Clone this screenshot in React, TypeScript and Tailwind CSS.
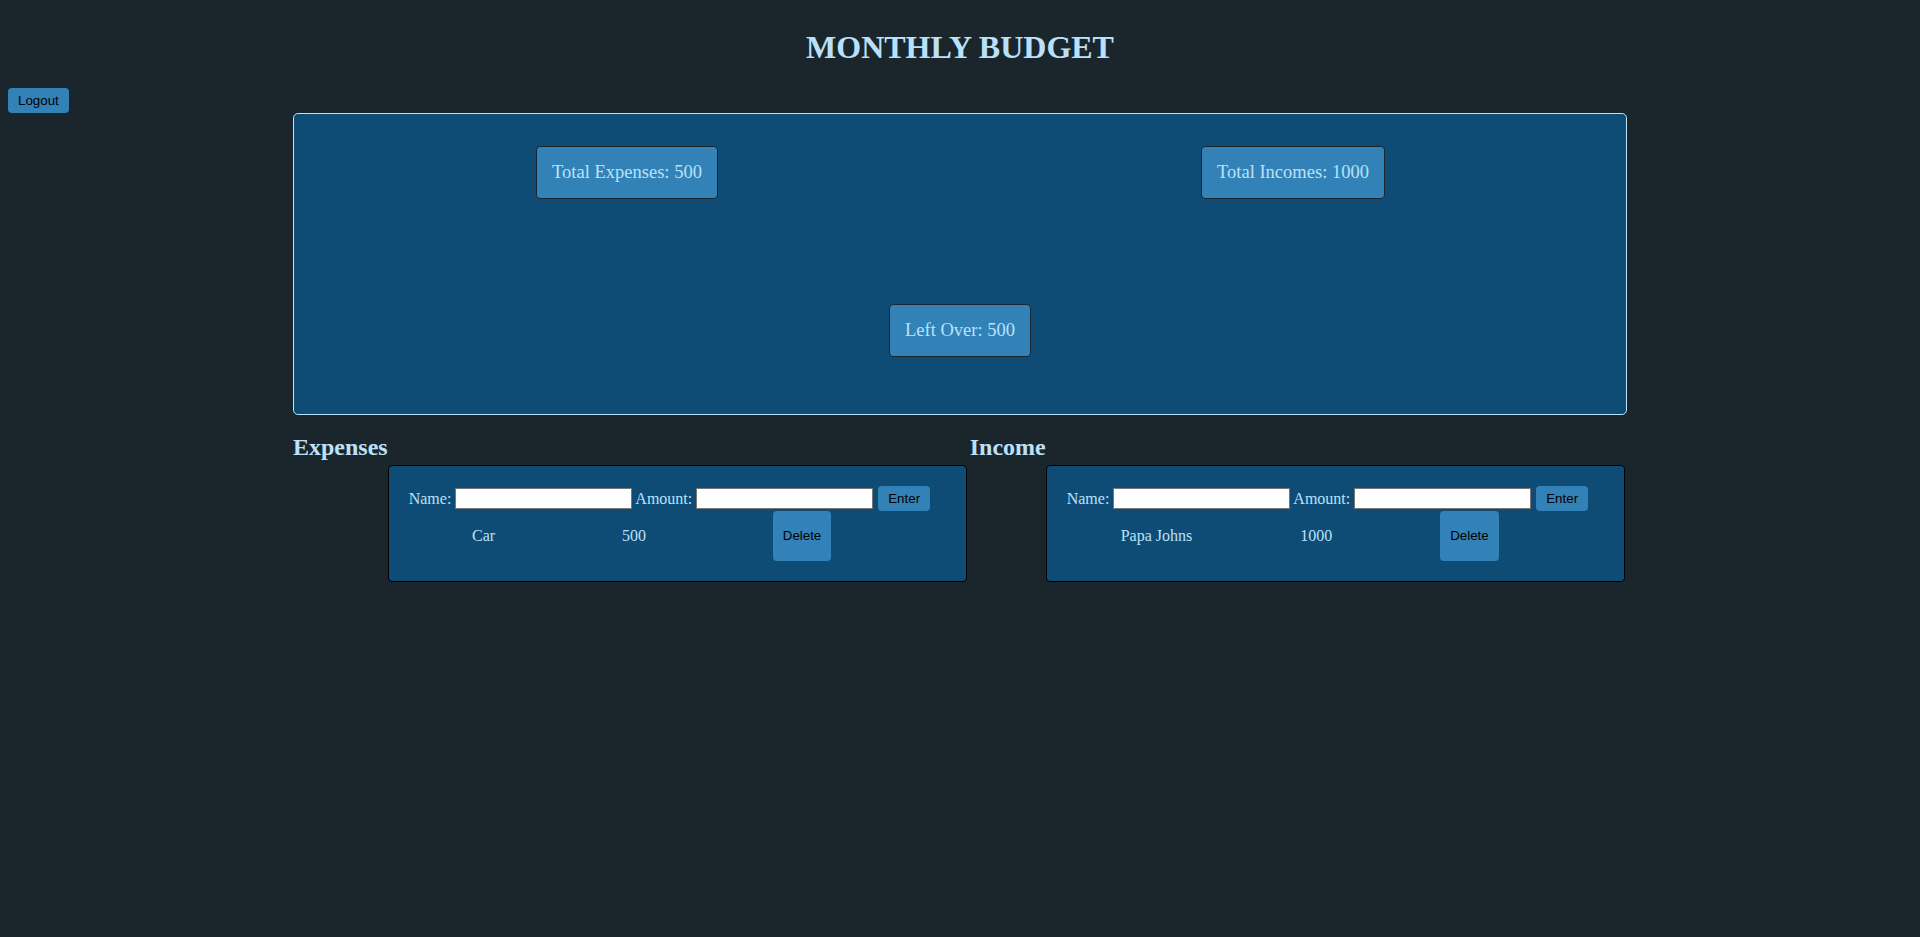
import React from "react";

type Entry = { name: string; amount: number };

const EXPENSES: Entry[] = [{ name: "Car", amount: 500 }];
const INCOMES: Entry[] = [{ name: "Papa Johns", amount: 1000 }];

const btn =
  "rounded-[4px] bg-[#3282b8] px-[10px] font-['Liberation_Sans',Arial,sans-serif] text-[13.33px] text-black";

function StatBox({ label, value }: { label: string; value: number }) {
  return (
    <div className="flex h-[53px] items-center rounded-[4px] border border-[#1b262c] bg-[#3282b8] px-[15px] text-[18.5px] text-[#bbe1fa]">
      {label}: {value}
    </div>
  );
}

function Section({ title, items }: { title: string; items: Entry[] }) {
  return (
    <div className="grid grid-cols-[auto_579px]">
      <h2 className="col-start-1 row-start-1 text-[24px] font-bold leading-[28px] text-[#bbe1fa]">
        {title}
      </h2>
      <div className="col-start-2 row-start-2 mt-[4px] rounded-[4px] border border-black bg-[#0f4c75] p-[20px] text-[16px] text-[#bbe1fa]">
        <div className="flex h-[25px] items-center">
          <span>Name:</span>
          <input
            type="text"
            className="ml-[4px] h-[21px] w-[177px] border border-[#767676] bg-white"
          />
          <span className="ml-[3px]">Amount:</span>
          <input
            type="text"
            className="ml-[4px] h-[21px] w-[177px] border border-[#767676] bg-white"
          />
          <button type="button" className={`${btn} ml-[5px] h-[25px]`}>
            Enter
          </button>
        </div>
        {items.map((it) => (
          <div key={it.name} className="flex h-[50px] w-[486px] items-center justify-around">
            <span>{it.name}</span>
            <span>{it.amount}</span>
            <button type="button" className={`${btn} h-[50px]`}>
              Delete
            </button>
          </div>
        ))}
      </div>
    </div>
  );
}

export default function App() {
  const totalExp = EXPENSES.reduce((s, e) => s + e.amount, 0);
  const totalInc = INCOMES.reduce((s, e) => s + e.amount, 0);

  return (
    <main className="min-h-screen bg-[#1b262c] font-['Liberation_Serif','Times_New_Roman',serif]">
      <h1 className="pt-[29px] text-center text-[32px] font-bold leading-[36px] text-[#bbe1fa]">
        MONTHLY BUDGET
      </h1>

      <button type="button" className={`${btn} ml-[8px] mt-[23px] block h-[25px]`}>
        Logout
      </button>

      {/* Totals */}
      <div className="mx-auto grid h-[302px] w-[1334px] grid-cols-2 content-start rounded-[5px] border border-[#bbe1fa] bg-[#0f4c75] pt-[32px]">
        <div className="flex justify-center">
          <StatBox label="Total Expenses" value={totalExp} />
        </div>
        <div className="flex justify-center">
          <StatBox label="Total Incomes" value={totalInc} />
        </div>
        <div className="col-span-2 mt-[105px] flex justify-center">
          <StatBox label="Left Over" value={totalInc - totalExp} />
        </div>
      </div>

      {/* Lists */}
      <div className="mx-auto mt-[18px] flex w-[1334px] gap-[3px]">
        <Section title="Expenses" items={EXPENSES} />
        <Section title="Income" items={INCOMES} />
      </div>
    </main>
  );
}
